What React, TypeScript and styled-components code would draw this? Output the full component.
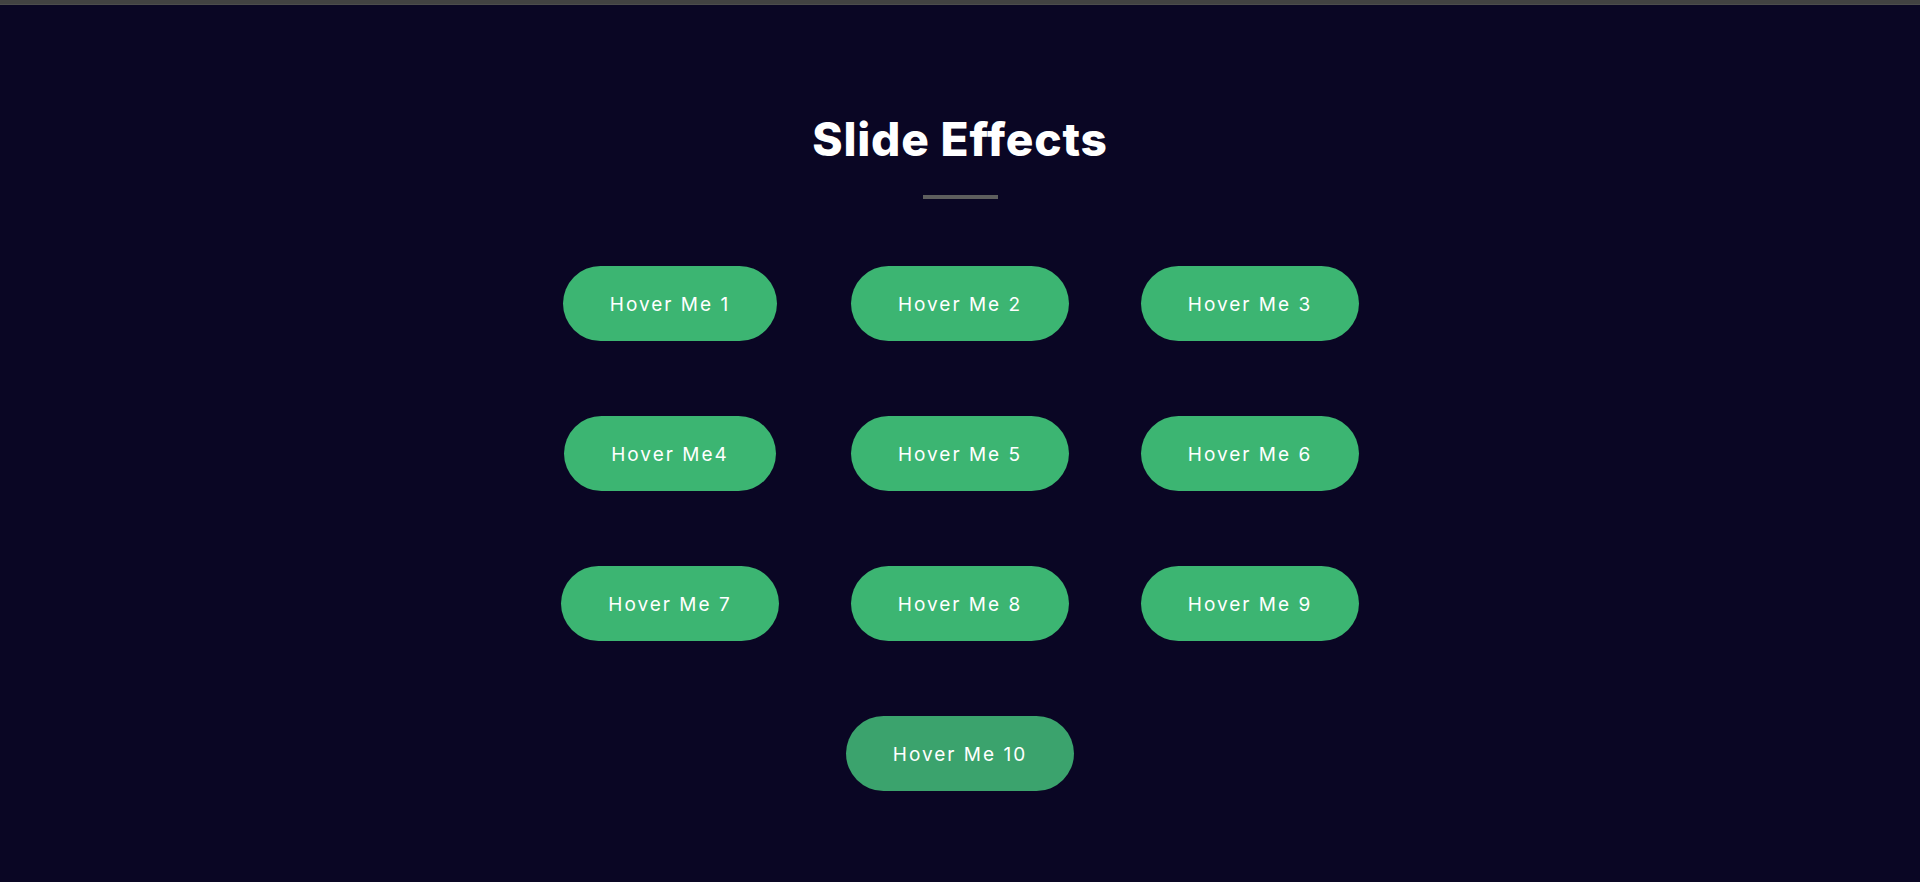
import React from "react";
import styled, { createGlobalStyle } from "styled-components";

const GlobalStyle = createGlobalStyle`
  html, body {
    margin: 0;
    padding: 0;
    background: #0a0624;
  }
  body {
    font-family: Inter, "Open Sans", sans-serif;
  }
`;

const Page = styled.div`
  min-height: 882px;
  background: #0a0624;
  display: flex;
  flex-direction: column;
`;

const TopBar = styled.div`
  height: 4px;
  background: #424242;
  border-bottom: 1px solid #4c4c4c;
`;

const Section = styled.section`
  display: flex;
  flex-direction: column;
  align-items: center;
  padding-top: 106px;
`;

const Title = styled.h1`
  margin: 0;
  font-family: Inter, sans-serif;
  font-weight: 800;
  font-size: 46px;
  line-height: 56px;
  color: #ffffff;
  letter-spacing: 0.8px;
`;

const Underline = styled.div`
  width: 75px;
  height: 4px;
  background: #5e5e5e;
  margin-top: 28px;
`;

const Grid = styled.div`
  margin-top: 67px;
  width: 872px;
  display: flex;
  flex-wrap: wrap;
  justify-content: center;
  row-gap: 75px;
`;

const Cell = styled.div`
  width: 290px;
  display: flex;
  justify-content: center;
`;

const Button = styled.button<{ $alt?: boolean }>`
  height: 75px;
  padding: 2px 47px 0;
  border: none;
  border-radius: 40px;
  background: ${(p) => (p.$alt ? "#3ba36d" : "#3cb572")};
  color: #ffffff;
  font-family: Inter, sans-serif;
  font-size: 19px;
  font-weight: 400;
  letter-spacing: 2px;
  cursor: pointer;
  white-space: nowrap;
`;

const labels = [
  "Hover Me 1",
  "Hover Me 2",
  "Hover Me 3",
  "Hover Me4",
  "Hover Me 5",
  "Hover Me 6",
  "Hover Me 7",
  "Hover Me 8",
  "Hover Me 9",
  "Hover Me 10",
];

export default function App() {
  return (
    <>
      <GlobalStyle />
      <Page>
        <TopBar />
        <Section>
          <Title>Slide Effects</Title>
          <Underline />
          <Grid>
            {labels.map((l, i) => (
              <Cell key={l}>
                <Button $alt={i === 9}>{l}</Button>
              </Cell>
            ))}
          </Grid>
        </Section>
      </Page>
    </>
  );
}
